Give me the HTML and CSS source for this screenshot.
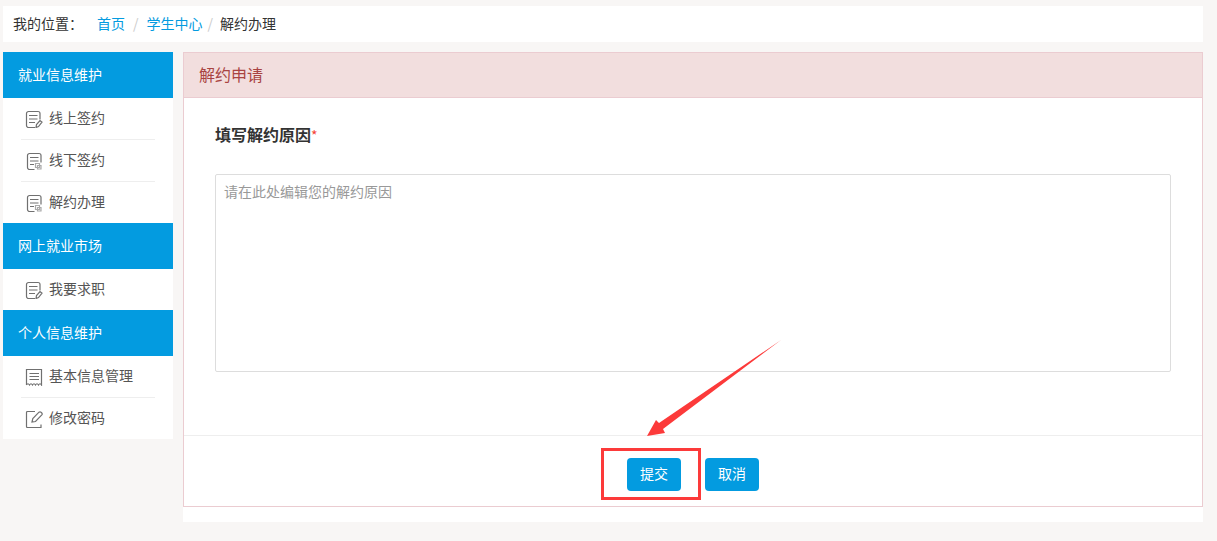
FILE: index.html
```html
<!DOCTYPE html>
<html lang="zh-CN">
<head>
    <meta charset="UTF-8">
    <meta name="viewport" content="width=device-width, initial-scale=1.0">
    <title>解约办理</title>
    <link rel="stylesheet" href="styles.css">
</head>
<body>
    <!-- Icons used in the side menu -->
    <svg class="sprite" aria-hidden="true">
        <symbol id="icon-edit" viewBox="0 0 18 18">
            <path d="M10 17.500H3.500a2 2 0 0 1-2-2v-12a2 2 0 0 1 2-2h9.500a2 2 0 0 1 2 2v6M4 5.500h8.500M4 9h8.500M4 12.500h6"/>
            <path d="M11 17.500l.5-3 3.500-4 2 1.500-3.500 4.500z"/>
        </symbol>
        <symbol id="icon-form" viewBox="0 0 18 18">
            <path d="M9.500 17.500H4.500a2 2 0 0 1-2-2v-12a2 2 0 0 1 2-2h9.500a2 2 0 0 1 2 2v7M5 5.500h8.500M5 9h8.500M5 12.500h4"/>
            <path class="light" d="M10.500 11.500h4v4h-4zM12.500 13.500h3.500v3.500h-3.500z"/>
        </symbol>
        <symbol id="icon-bill" viewBox="0 0 18 18">
            <path d="M1.500 17V1.500h15V17q-1.500-2.500-3 0q-1.500-2.500-3 0q-1.500-2.500-3 0q-1.500-2.500-3 0q-1.500-2.500-3 0M4.500 5.500h9.500M4.500 8.500h9.500M4.500 11.500h9.500"/>
        </symbol>
        <symbol id="icon-pen" viewBox="0 0 18 18">
            <path d="M10 1.500H2.500a1 1 0 0 0-1 1v14a1 1 0 0 0 1 1h13.500V14.500M7 12l.8-3.500 6.200-6.300q1-.8 2 0l.8.8q.8.9 0 1.800L10.500 11.500z"/>
        </symbol>
    </svg>

    <nav class="breadcrumb">
        <span class="breadcrumb-label">我的位置：</span>
        <a href="#">首页</a>
        <span class="slash wide">/</span>
        <a href="#">学生中心</a>
        <span class="slash">/</span>
        <span>解约办理</span>
    </nav>

    <div class="main">
        <aside class="sidebar">
            <h2>就业信息维护</h2>
            <ul>
                <li><a href="#"><svg class="icon"><use href="#icon-edit"/></svg>线上签约</a></li>
                <li><a href="#"><svg class="icon"><use href="#icon-form"/></svg>线下签约</a></li>
                <li><a href="#"><svg class="icon"><use href="#icon-form"/></svg>解约办理</a></li>
            </ul>
            <h2>网上就业市场</h2>
            <ul>
                <li><a href="#"><svg class="icon"><use href="#icon-edit"/></svg>我要求职</a></li>
            </ul>
            <h2>个人信息维护</h2>
            <ul>
                <li><a href="#"><svg class="icon"><use href="#icon-bill"/></svg>基本信息管理</a></li>
                <li><a href="#"><svg class="icon"><use href="#icon-pen"/></svg>修改密码</a></li>
            </ul>
        </aside>

        <div class="content">
            <form class="panel">
                <h1 class="panel-heading">解约申请</h1>
                <div class="panel-body">
                    <label for="reason">填写解约原因<span class="required">*</span></label>
                    <textarea id="reason" placeholder="请在此处编辑您的解约原因"></textarea>
                </div>
                <div class="panel-footer">
                    <div class="submit-wrap">
                        <button type="submit">提交</button>
                        <svg class="pointer" viewBox="0 0 180 160" aria-hidden="true">
                            <path d="M46 96L55 80L58 83L180 0L62 89L64 93Z"/>
                            <rect x="1.500" y="109.500" width="97" height="49"/>
                        </svg>
                    </div>
                    <button type="button">取消</button>
                </div>
            </form>
        </div>
    </div>
</body>
</html>
```
FILE: styles.css
```css
/* Global Styles */
* {
    box-sizing: border-box;
}

body {
    font-family: "Microsoft YaHei", "Noto Sans CJK SC", sans-serif;
    font-size: 14px;
    line-height: 20px;
    margin: 0;
    padding: 6px 14px 19px 3px;
    background-color: #f8f6f5;
    color: #333;
}

h1,
h2,
ul {
    margin: 0;
    padding: 0;
}

a {
    color: #039be0;
    text-decoration: none;
}

.sprite {
    display: none;
}

/* Breadcrumb */
.breadcrumb {
    display: flex;
    align-items: center;
    height: 36px;
    padding: 0 10px 2px;
    background-color: #fff;
}

.breadcrumb-label {
    margin-right: 14px;
}

.slash {
    margin: 0 7px 0 5px;
    color: #ccc;
}

.slash.wide {
    margin: 0 8px;
}

.main {
    display: flex;
    align-items: flex-start;
    gap: 10px;
    margin-top: 10px;
}

/* Side menu */
.sidebar {
    flex: 0 0 170px;
    background-color: #fff;
}

.sidebar h2 {
    padding: 12px 15px 14px;
    background-color: #039be0;
    color: #fff;
    font-size: 14px;
    font-weight: normal;
}

.sidebar ul {
    padding: 0 18px;
    list-style: none;
}

.sidebar li + li {
    border-top: 1px solid #eee;
}

.sidebar li a {
    display: flex;
    align-items: center;
    height: 41px;
    padding: 0 0 3px 4px;
    color: #555;
}

.icon {
    width: 18px;
    height: 18px;
    margin: 3px 6px 0 0;
    fill: none;
    stroke: #707070;
    stroke-width: 1.2;
}

.light {
    stroke: #aaa;
}

/* Application form */
.content {
    flex: 1;
    padding-bottom: 15px;
    background-color: #fff;
}

.panel {
    border: 1px solid #ebccd1;
}

.panel-heading {
    padding: 11px 15px 13px;
    border-bottom: 1px solid #ebccd1;
    background-color: #f2dede;
    color: #a94442;
    font-size: 16px;
    font-weight: normal;
}

.panel-body {
    padding: 26px 31px 63px;
}

.panel-body label {
    display: block;
    margin-bottom: 29px;
    font-size: 16px;
    font-weight: bold;
}

.required {
    color: #f44336;
    font-size: 14px;
    font-weight: normal;
}

textarea {
    display: block;
    width: 100%;
    height: 198px;
    padding: 6px 8px;
    border: 1px solid #ddd;
    border-radius: 2px;
    font: inherit;
    resize: none;
}

textarea::placeholder {
    color: #999;
}

.panel-footer {
    display: flex;
    justify-content: center;
    gap: 24px;
    padding: 22px 15px 15px;
    border-top: 1px solid #eee;
}

.submit-wrap {
    position: relative;
}

button {
    display: block;
    height: 33px;
    padding: 0 13px 3px;
    border: none;
    border-radius: 4px;
    background-color: #039be0;
    color: #fff;
    font: inherit;
    cursor: pointer;
}

/* Arrow and frame over the submit button */
.pointer {
    position: absolute;
    left: -26px;
    top: -118px;
    width: 180px;
    height: 160px;
    pointer-events: none;
}

.pointer path {
    fill: #fc3a3a;
}

.pointer rect {
    fill: none;
    stroke: #fc3a3a;
    stroke-width: 3;
}
```
